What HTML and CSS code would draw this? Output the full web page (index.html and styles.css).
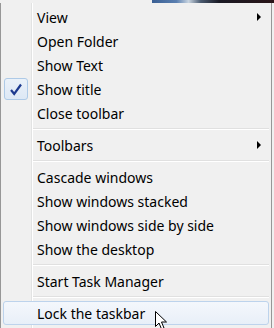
FILE: index.html
```html
<!DOCTYPE html>
<html>
<head>
<meta charset="utf-8">
<link rel="stylesheet" href="styles.css">
</head>
<body>
<div class="screen">
  <div class="topstrip"><div class="bar"></div></div>
  <div class="menu">
    <div class="item"><span class="icon"></span><span class="label">View</span><span class="arrow"></span></div>
    <div class="item"><span class="icon"></span><span class="label">Open Folder</span></div>
    <div class="item"><span class="icon"></span><span class="label">Show Text</span></div>
    <div class="item"><span class="icon checked"><svg width="14" height="13" viewBox="0 0 14 13"><path d="M2 7 L5.2 11 L12 1.5" fill="none" stroke="#1d3a8f" stroke-width="2.2"/></svg></span><span class="label">Show title</span></div>
    <div class="item"><span class="icon"></span><span class="label">Close toolbar</span></div>
    <div class="sep"></div>
    <div class="item"><span class="icon"></span><span class="label">Toolbars</span><span class="arrow"></span></div>
    <div class="sep"></div>
    <div class="item"><span class="icon"></span><span class="label">Cascade windows</span></div>
    <div class="item"><span class="icon"></span><span class="label">Show windows stacked</span></div>
    <div class="item"><span class="icon"></span><span class="label">Show windows side by side</span></div>
    <div class="item"><span class="icon"></span><span class="label">Show the desktop</span></div>
    <div class="sep"></div>
    <div class="item"><span class="icon"></span><span class="label">Start Task Manager</span></div>
    <div class="sep"></div>
    <div class="item hover"><span class="icon"></span><span class="label">Lock the taskbar</span></div>
  </div>
  <svg class="cursor" width="14" height="20" viewBox="0 0 14 20"><path d="M0.5 0.5 L0.5 15.5 L4 12 L6.5 18 L9 17 L6.5 11 L11.5 11 Z" fill="#fff" stroke="#000" stroke-width="1"/></svg>
</div>
</body>
</html>
```
FILE: styles.css
```css
html, body {
  margin: 0;
  padding: 0;
  background: #f0f0f0;
}
.screen {
  position: relative;
  width: 274px;
  height: 328px;
  overflow: hidden;
  font-family: "Noto Sans", "Open Sans", sans-serif;
  font-size: 14px;
  color: #000;
}
.topstrip {
  height: 3px;
  display: flex;
  justify-content: flex-end;
  background: #f0f0f0;
}
.topstrip .bar {
  width: 122px;
  background: linear-gradient(90deg, #3a5f94 0%, #5a7fb0 20%, #c8d4e0 30%, #4a5a70 40%, #1a1a24 55%, #2a1518 100%);
}
.menu {
  box-sizing: border-box;
  width: 272px;
  height: 325px;
  border-left: 1px solid #979797;
  border-right: 1px solid #979797;
  padding: 2px 2px 0 2px;
  background-color: #f0f0f0;
  background-image: linear-gradient(90deg, transparent 30px, #e2e3e3 30px, #e2e3e3 31px, #ffffff 31px, #ffffff 32px, transparent 32px);
}
.item {
  height: 24px;
  display: flex;
  align-items: center;
  box-sizing: border-box;
  border: 1px solid transparent;
  border-radius: 3px;
}
.icon {
  width: 24px;
  height: 22px;
  flex: none;
  display: flex;
  align-items: center;
  justify-content: center;
  box-sizing: border-box;
  border-radius: 3px;
}
.icon.checked {
  border: 1px solid #aecae7;
  background: linear-gradient(180deg, #eaf1f9, #dde8f5);
}
.label {
  margin-left: 9px;
  padding-top: 1px;
  flex: 1;
  white-space: nowrap;
  line-height: 21px;
}
.arrow {
  width: 0;
  height: 0;
  border-top: 4px solid transparent;
  border-bottom: 4px solid transparent;
  border-left: 4px solid #000;
  margin-right: 7px;
}
.sep {
  height: 8px;
  margin-left: 30px;
  background: linear-gradient(180deg, transparent 3px, #e0e0e0 3px, #e0e0e0 4px, #ffffff 4px, #ffffff 5px, transparent 5px);
}
.item.hover {
  border: 1px solid #bdd3ec;
  background: linear-gradient(180deg, #f4f7fc, #e8eff8);
}
.cursor {
  position: absolute;
  left: 155px;
  top: 311px;
}
```
